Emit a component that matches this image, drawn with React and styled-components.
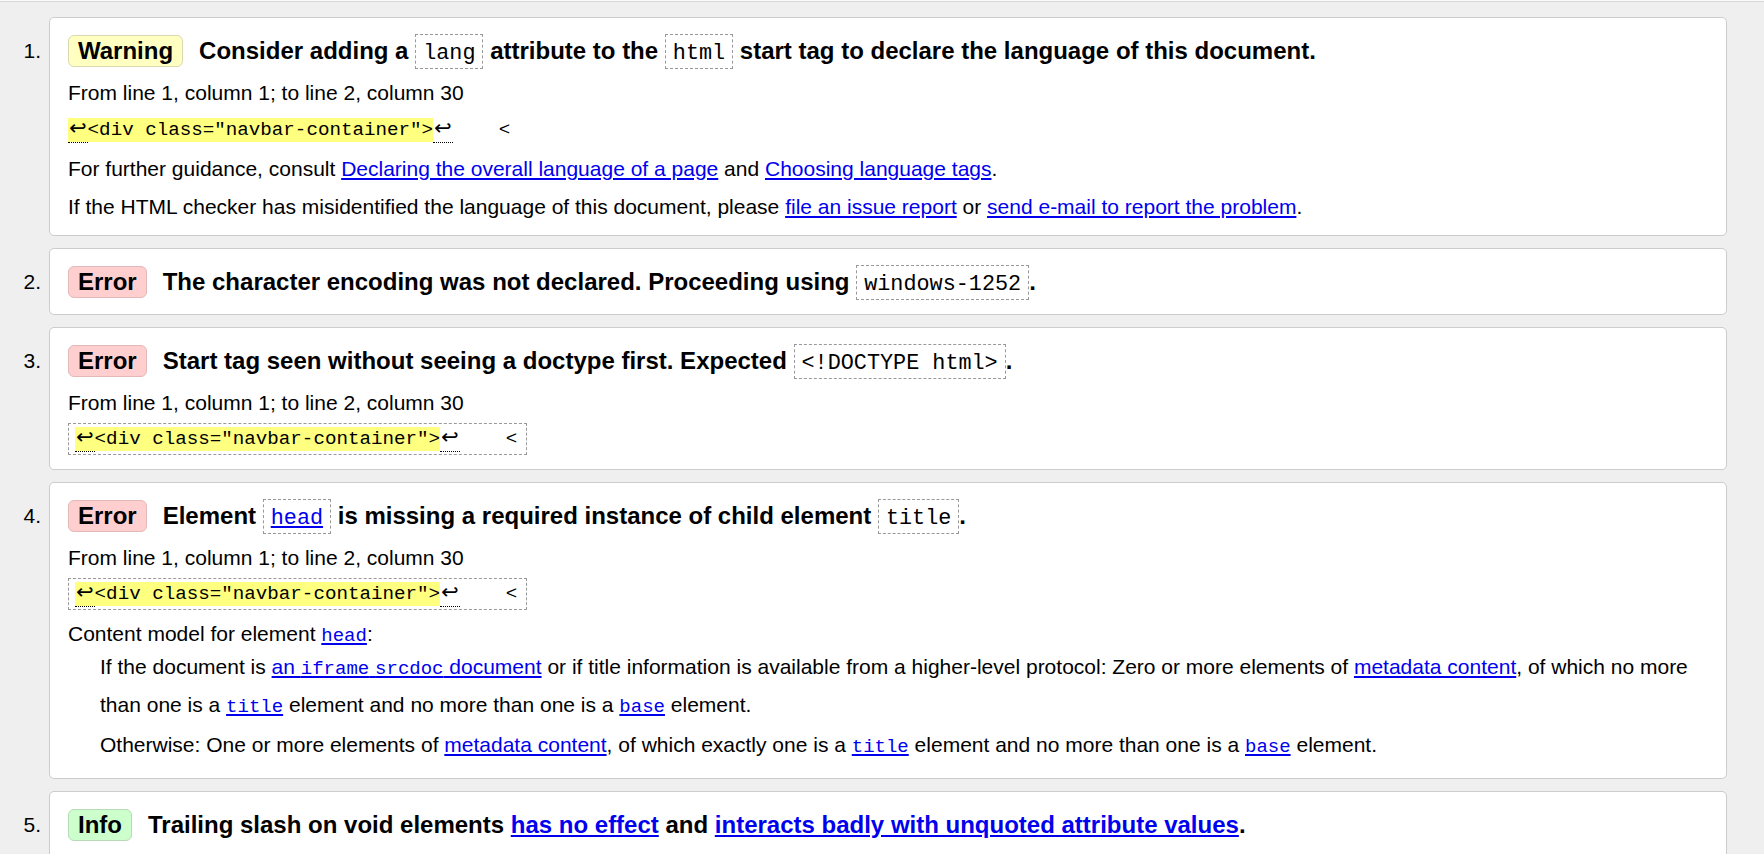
import React from "react";
import styled, { createGlobalStyle, css } from "styled-components";

const SANS = `"Liberation Sans", Arial, sans-serif`;
const MONO = `"Liberation Mono", "DejaVu Sans Mono", monospace`;

const GlobalStyle = createGlobalStyle`
  html, body {
    margin: 0;
    padding: 0;
  }
  body {
    background: #efefef;
    font-family: ${SANS};
    color: #000;
  }
`;

const badgeColors = {
  warning: { bg: "#ffffc2", border: "#d9d9b0" },
  error: { bg: "#ffcfcf", border: "#e2b8b8" },
  info: { bg: "#ccffcc", border: "#b6dab6" },
};

const TopRule = styled.div`
  border-top: 1px solid #fafafa;
  border-bottom: 1px solid #d8d8d8;
`;

const Messages = styled.ol`
  list-style: none;
  margin: 0;
  padding: 15px 37px 0 0;
  display: flex;
  flex-direction: column;
  gap: 12px;
`;

const Item = styled.li`
  display: flex;
  align-items: flex-start;
`;

const Num = styled.span`
  flex: 0 0 49px;
  box-sizing: border-box;
  padding: 16px 8px 0 0;
  text-align: right;
  font-size: 21px;
  line-height: 35px;
`;

const Card = styled.div`
  flex: 1;
  min-width: 0;
  background: #fff;
  border: 1px solid #ccc;
  border-radius: 5px;
  padding: 15px 18px 14px;
  display: flex;
  flex-direction: column;
  gap: 9px;
`;

const Head = styled.div`
  display: flex;
  align-items: center;
  gap: 16px;
  min-height: 35px;
`;

const Badge = styled.span`
  flex: none;
  box-sizing: border-box;
  height: 32px;
  padding: 0 9px;
  border: 1px solid ${(p) => badgeColors[p.$kind].border};
  background: ${(p) => badgeColors[p.$kind].bg};
  border-radius: 6px;
  font-size: 24px;
  font-weight: bold;
  line-height: 30px;
`;

const Title = styled.div`
  font-size: 24px;
  font-weight: bold;
  line-height: 35px;
  white-space: nowrap;
`;

const TitleCode = styled.code`
  display: inline-block;
  font-family: ${MONO};
  font-size: 21.8px;
  font-weight: normal;
  line-height: 25px;
  padding: 6px 7px 2px;
  border: 1px dashed #999;
`;

const Line = styled.p`
  margin: 0;
  font-size: 21px;
  line-height: 29px;
`;

const Link = styled.a`
  color: #0000ee;
  text-decoration: underline;
  font-weight: ${(p) => (p.$strong ? "bold" : "inherit")};
`;

const Code = styled.code`
  font-family: ${MONO};
  font-size: 19px;
  line-height: 0;
`;

const Extract = styled.div`
  align-self: flex-start;
  font-family: ${MONO};
  font-size: 19.2px;
  line-height: 29px;
  white-space: pre;
  ${(p) =>
    p.$boxed &&
    css`
      margin-top: -3px;
      line-height: 28px;
      padding: 1px 9px 1px 6px;
      border: 1px dashed #999;
    `}
`;

const Highlight = styled.mark`
  background: #ffff80;
  color: inherit;
  padding: 1px 0;
`;

const Lf = styled.b`
  font-family: "DejaVu Sans", sans-serif;
  font-size: 21px;
  font-weight: normal;
  line-height: 0;
  padding: 0 1px 2px;
  border-bottom: 1px dotted #000;
`;

const ContentModel = styled.div`
  font-size: 21px;
`;

const Definition = styled.div`
  padding-left: 32px;
  line-height: 38px;

  p {
    margin: 0;
  }
  p + p {
    margin-top: 2px;
  }
`;

function Message({ n, kind, label, title, children }) {
  return (
    <Item>
      <Num>{n}.</Num>
      <Card>
        <Head>
          <Badge $kind={kind}>{label}</Badge>
          <Title>{title}</Title>
        </Head>
        {children}
      </Card>
    </Item>
  );
}

function SourceExtract({ boxed }) {
  return (
    <Extract $boxed={boxed}>
      <Highlight>
        <Lf title="LF">↩</Lf>
        {'<div class="navbar-container">'}
      </Highlight>
      <Lf title="LF">↩</Lf>
      {"    <"}
    </Extract>
  );
}

const Location = () => <Line>From line 1, column 1; to line 2, column 30</Line>;

export default function App() {
  return (
    <>
      <GlobalStyle />
      <TopRule />
      <Messages>
        <Message
          n={1}
          kind="warning"
          label="Warning"
          title={
            <>
              Consider adding a <TitleCode>lang</TitleCode> attribute to the{" "}
              <TitleCode>html</TitleCode> start tag to declare the language of
              this document.
            </>
          }
        >
          <Location />
          <SourceExtract />
          <Line>
            For further guidance, consult{" "}
            <Link href="#">Declaring the overall language of a page</Link> and{" "}
            <Link href="#">Choosing language tags</Link>.
          </Line>
          <Line>
            If the HTML checker has misidentified the language of this document,
            please <Link href="#">file an issue report</Link> or{" "}
            <Link href="#">send e-mail to report the problem</Link>.
          </Line>
        </Message>

        <Message
          n={2}
          kind="error"
          label="Error"
          title={
            <>
              The character encoding was not declared. Proceeding using{" "}
              <TitleCode>windows-1252</TitleCode>.
            </>
          }
        />

        <Message
          n={3}
          kind="error"
          label="Error"
          title={
            <>
              Start tag seen without seeing a doctype first. Expected{" "}
              <TitleCode>{"<!DOCTYPE html>"}</TitleCode>.
            </>
          }
        >
          <Location />
          <SourceExtract boxed />
        </Message>

        <Message
          n={4}
          kind="error"
          label="Error"
          title={
            <>
              Element{" "}
              <TitleCode>
                <Link href="#">head</Link>
              </TitleCode>{" "}
              is missing a required instance of child element{" "}
              <TitleCode>title</TitleCode>.
            </>
          }
        >
          <Location />
          <SourceExtract boxed />
          <ContentModel>
            <Line>
              Content model for element{" "}
              <Link href="#">
                <Code>head</Code>
              </Link>
              :
            </Line>
            <Definition>
              <p>
                If the document is{" "}
                <Link href="#">
                  an <Code>iframe</Code> <Code>srcdoc</Code> document
                </Link>{" "}
                or if title information is available from a higher-level
                protocol: Zero or more elements of{" "}
                <Link href="#">metadata content</Link>, of which no more than one
                is a{" "}
                <Link href="#">
                  <Code>title</Code>
                </Link>{" "}
                element and no more than one is a{" "}
                <Link href="#">
                  <Code>base</Code>
                </Link>{" "}
                element.
              </p>
              <p>
                Otherwise: One or more elements of{" "}
                <Link href="#">metadata content</Link>, of which exactly one is a{" "}
                <Link href="#">
                  <Code>title</Code>
                </Link>{" "}
                element and no more than one is a{" "}
                <Link href="#">
                  <Code>base</Code>
                </Link>{" "}
                element.
              </p>
            </Definition>
          </ContentModel>
        </Message>

        <Message
          n={5}
          kind="info"
          label="Info"
          title={
            <>
              Trailing slash on void elements{" "}
              <Link href="#" $strong>
                has no effect
              </Link>{" "}
              and{" "}
              <Link href="#" $strong>
                interacts badly with unquoted attribute values
              </Link>
              .
            </>
          }
        >
          <Location />
        </Message>
      </Messages>
    </>
  );
}
